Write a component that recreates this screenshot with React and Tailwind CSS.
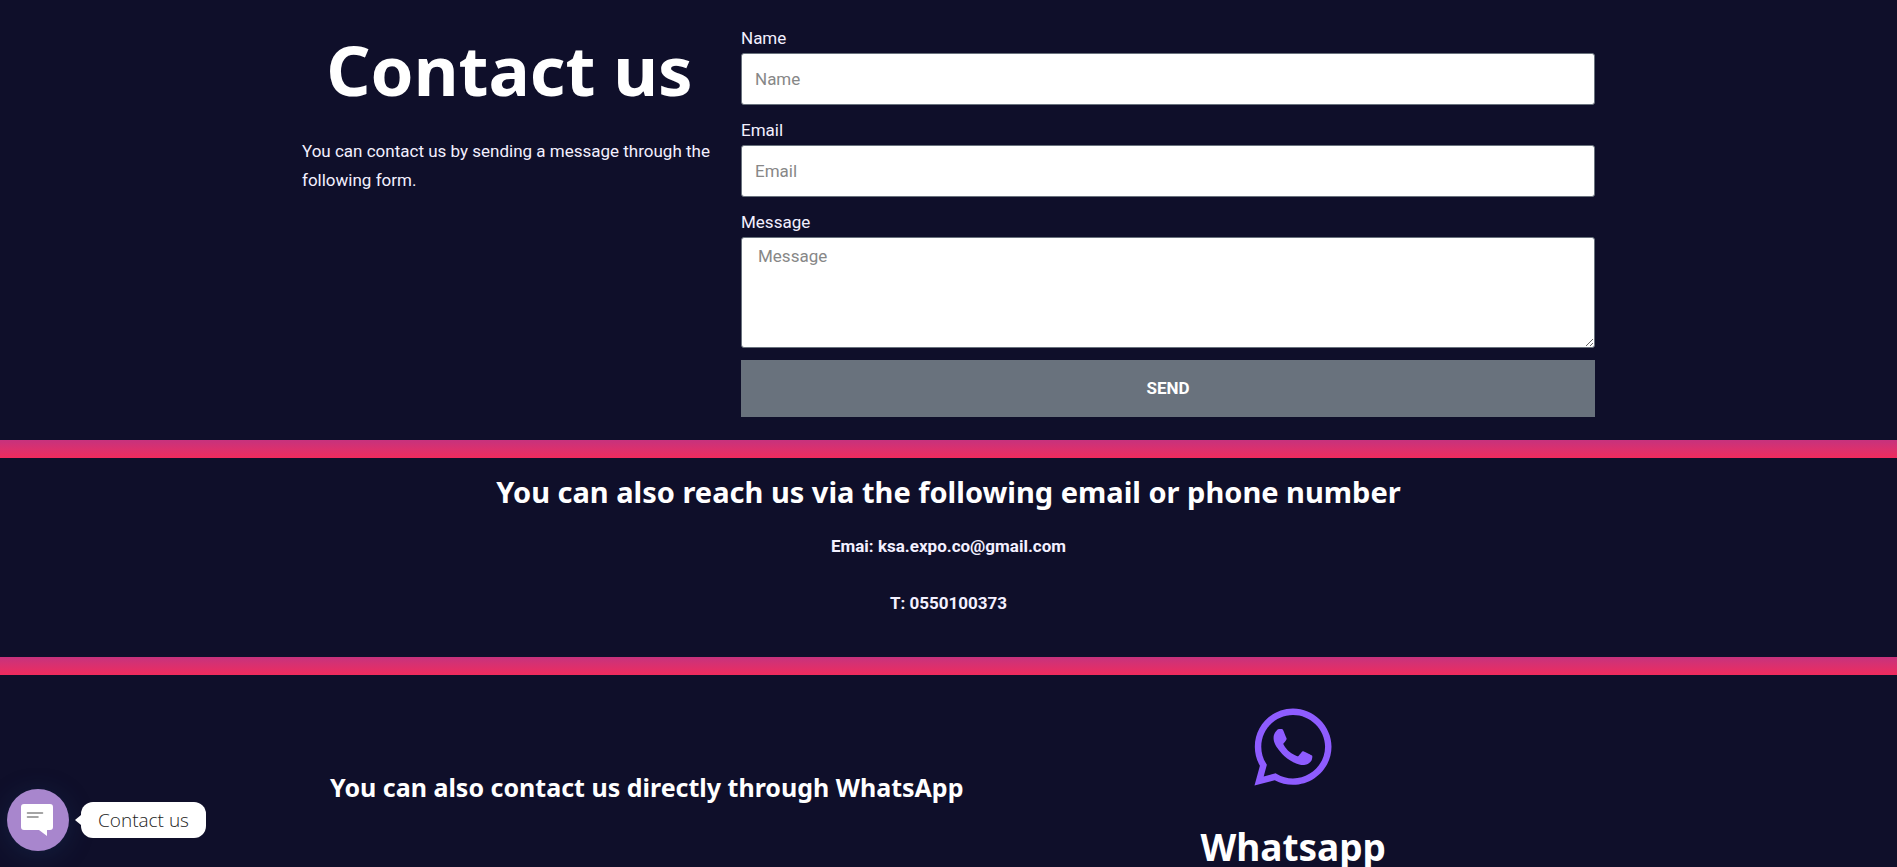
import { useState } from "react";
import { FaWhatsapp } from "react-icons/fa";

const inputClass =
  "block w-full rounded-[3px] border border-[#69727d] bg-white text-[17px] leading-6 text-[#444] placeholder:text-[#878787] focus:outline-none";

function Field({ id, label, children }) {
  return (
    <div className="mb-3">
      <label htmlFor={id} className="block pb-[2px] text-[17px] leading-[26px] text-[#f3f0ff]">{label}</label>
      {children}
    </div>
  );
}

function ContactForm() {
  const [form, setForm] = useState({ name: "", email: "", message: "" });
  const onChange = (e) => setForm((prev) => ({ ...prev, [e.target.name]: e.target.value }));

  return (
    <form onSubmit={(e) => e.preventDefault()}>
      <Field id="name" label="Name">
        <input id="name" name="name" type="text" placeholder="Name" value={form.name} onChange={onChange} className={`${inputClass} h-[52px] px-[13px]`} />
      </Field>
      <Field id="email" label="Email">
        <input id="email" name="email" type="email" placeholder="Email" value={form.email} onChange={onChange} className={`${inputClass} h-[52px] px-[13px]`} />
      </Field>
      <Field id="message" label="Message">
        <textarea id="message" name="message" placeholder="Message" value={form.message} onChange={onChange} className={`${inputClass} h-[111px] resize-y px-4 py-[6px]`} />
      </Field>
      <button type="submit" className="h-[57px] w-full bg-[#69727d] text-[17px] font-bold text-white">SEND</button>
    </form>
  );
}

function Divider() {
  return <div className="h-[18px] bg-linear-to-b from-[#c6327d] to-[#f02a5c]" />;
}

function ChatWidget() {
  return (
    <div className="fixed bottom-4 left-[7px] flex items-center">
      <button type="button" aria-label="Open chat" className="flex h-[62px] w-[62px] items-center justify-center rounded-full bg-[#a886cd] pr-[2px] shadow-[0_4px_24px_rgba(30,60,100,0.35)]">
        <svg width="32" height="32" viewBox="0 0 32 32">
          <path d="M3 0h26a3 3 0 0 1 3 3v20a3 3 0 0 1-3 3h-3v6l-8-6H3a3 3 0 0 1-3-3V3a3 3 0 0 1 3-3Z" fill="#fff" />
          <path d="M6.500 9h15M6.500 13h10.500" stroke="#878787" strokeWidth="1.600" strokeLinecap="round" />
        </svg>
      </button>
      <div className="ml-[6px] h-0 w-0 border-y-[5px] border-r-[6px] border-y-transparent border-r-white" />
      <div className="rounded-[12px] bg-white px-[17px] py-[5px] font-['Open_Sans',sans-serif] text-[19px] leading-[26px] font-light text-[#222]">Contact us</div>
    </div>
  );
}

function App() {
  return (
    <div className="min-h-screen bg-[#0f0f2a] font-[Roboto,sans-serif] text-white">
      <section className="mx-auto grid max-w-[1317px] grid-cols-3 pt-[25px] pb-[23px]">
        <div className="px-3">
          <h1 className="text-center font-['Noto_Sans',sans-serif] text-[69px] leading-[88px] font-bold">Contact us</h1>
          <p className="pt-6 text-[17px] leading-[29px] text-[#f3f0ff]">You can contact us by sending a message through the following form.</p>
        </div>
        <div className="col-span-2 px-3">
          <ContactForm />
        </div>
      </section>

      <Divider />

      <section className="px-3 pt-4 pb-[39px] text-center">
        <h2 className="font-['Noto_Sans',sans-serif] text-[29px] leading-9 font-bold">You can also reach us via the following email or phone number</h2>
        <p className="pt-[22px] text-[17px] leading-[29px] font-bold text-[#f3f0ff]">
          Emai: <a href="mailto:ksa.expo.co@gmail.com">ksa.expo.co@gmail.com</a>
        </p>
        <p className="pt-7 text-[17px] leading-[29px] font-bold text-[#f3f0ff]">T: 0550100373</p>
      </section>

      <Divider />

      <section className="mx-auto grid max-w-[1317px] grid-cols-[690fr_628fr] items-center pt-7">
        <h2 className="pt-1 pl-6 text-center font-['Noto_Sans',sans-serif] text-[25px] leading-8 font-bold">You can also contact us directly through WhatsApp</h2>
        <div className="flex flex-col items-center">
          <FaWhatsapp size={88} className="text-[#8e5cff]" />
          <h3 className="pt-9 font-['Noto_Sans',sans-serif] text-[37px] leading-10 font-bold">Whatsapp</h3>
        </div>
      </section>

      <ChatWidget />
    </div>
  );
}

export default App;
